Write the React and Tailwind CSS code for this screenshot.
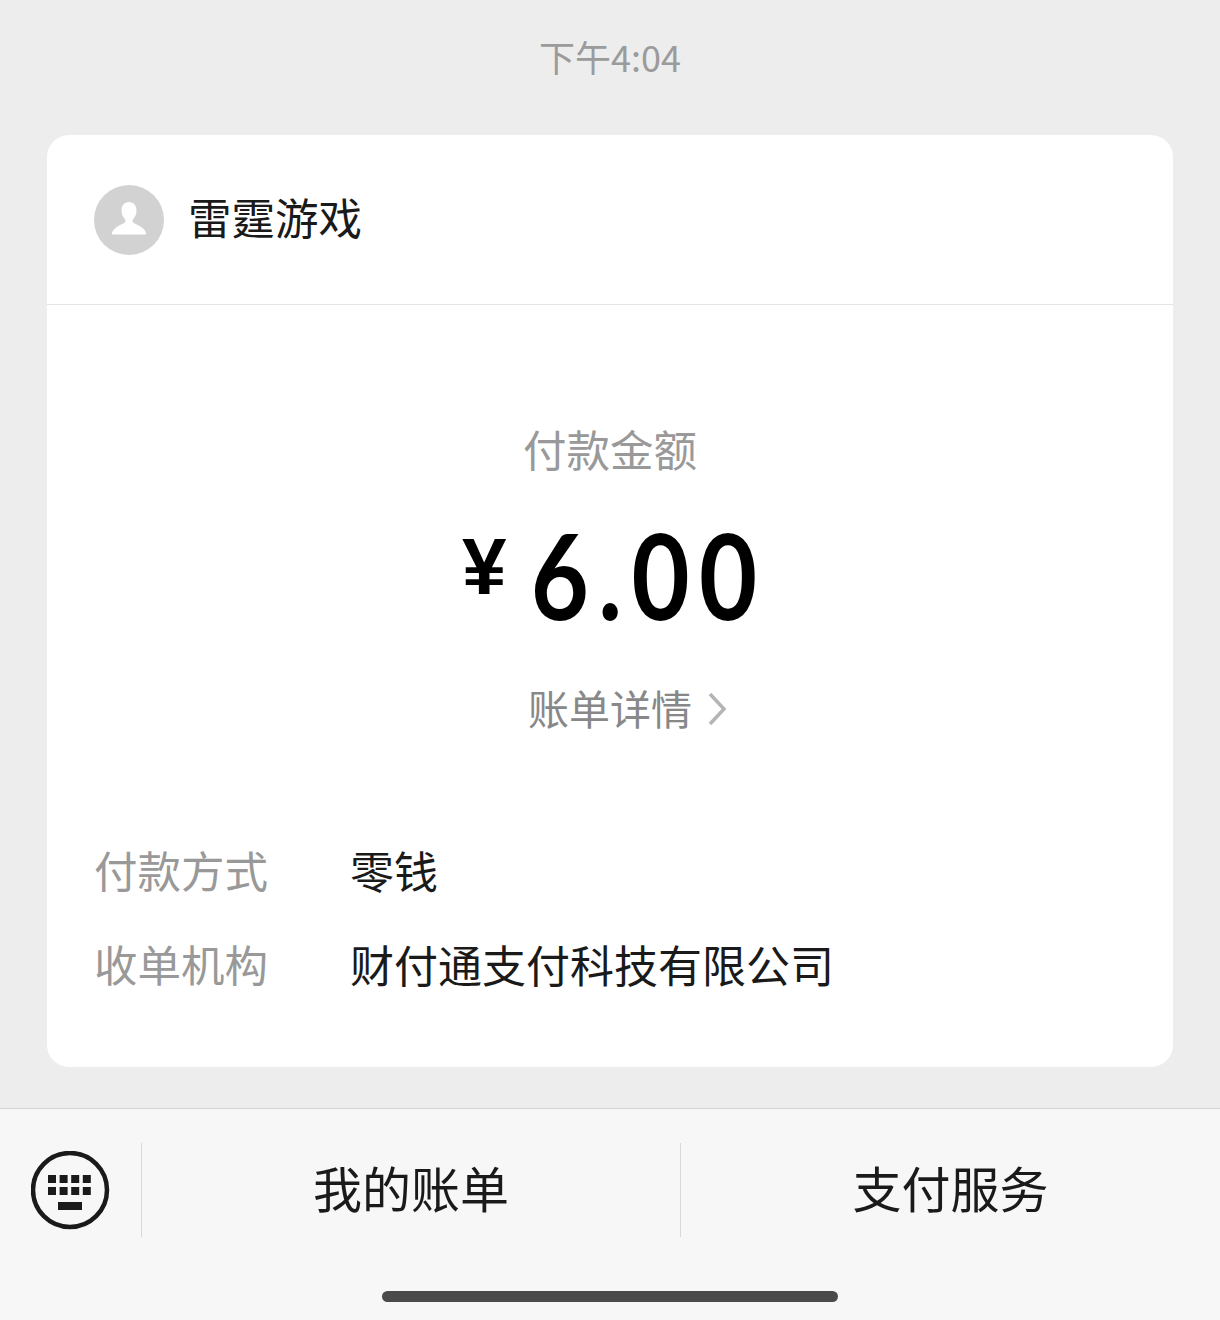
const cjk = "font-['Noto_Sans_CJK_SC','Noto_Sans',sans-serif]";

function Avatar() {
  return (
    <div className="w-[70px] h-[70px] rounded-full bg-[#d2d2d2] flex items-center justify-center">
      <svg width="70" height="70" viewBox="0 0 70 70">
        <path
          d="M35 17c-4.500 0-7.500 3.500-7.500 8.500 0 3.500 1.200 6.500 3.300 8.500 .8.800.8 3-.2 3.800-3 2-10.600 4-12.600 10-.3 1 0 1.700 1 1.700h32c1 0 1.300-.7 1-1.700-2-6-9.600-8-12.600-10-1-.8-1-3-.2-3.800 2.100-2 3.300-5 3.300-8.500 0-5-3-8.500-7.500-8.500z"
          fill="#fff"
        />
      </svg>
    </div>
  );
}

function KeyboardIcon() {
  const keys = [];
  for (let r = 0; r < 2; r++) {
    for (let c = 0; c < 4; c++) {
      keys.push(<rect key={`${r}-${c}`} x={17 + c * 11.600} y={24 + r * 12} width="8" height="8" />);
    }
  }
  return (
    <svg width="80" height="80" viewBox="0 0 80 80" fill="#1a1a1a" className="mt-[2px]">
      <circle cx="39" cy="39" r="37" fill="none" stroke="#1a1a1a" strokeWidth="4.500" />
      {keys}
      <rect x="27" y="51" width="24" height="8" />
    </svg>
  );
}

function InfoRow({ label, value }) {
  return (
    <div className="flex h-[60px] items-center">
      <span className="w-[256px] text-[43.500px] text-[#999999]">{label}</span>
      <span className="text-[44px] text-[#1a1a1a]">{value}</span>
    </div>
  );
}

export default function App() {
  return (
    <div className={`${cjk} w-[1220px] h-[1320px] bg-[#ededed] flex flex-col overflow-hidden`}>
      <div className="h-[135px] pb-[24px] flex items-center justify-center text-[36px] text-[#9b9b9b]">
        下午4:04
      </div>

      <div className="mx-[47px] h-[932px] bg-white rounded-[22px] flex flex-col">
        <div className="h-[170px] pl-[47px] pb-[5px] flex items-center gap-[24px] border-b border-[#e5e5e5]">
          <div className="mt-[5px]">
            <Avatar />
          </div>
          <span className="text-[43.500px] text-[#1a1a1a]">雷霆游戏</span>
        </div>

        <div className="flex flex-col items-center pt-[114px]">
          <div className="h-[60px] flex items-center text-[43.500px] text-[#999999]">付款金额</div>
          <div className="h-[199px] pb-[8px] pl-[8px] flex items-center text-black">
            <span className="font-['Liberation_Sans',sans-serif] font-bold text-[80px] leading-none -mt-[16px] mr-[24px]">¥</span>
            <span className="font-['Lato',sans-serif] font-bold text-[118px] tracking-[11px] [font-kerning:none] leading-none scale-x-[0.85] -mx-[21px]">6.00</span>
          </div>
          <div className="relative h-[60px] flex items-center text-[41px] text-[#888888]">
            <span>账单详情</span>
            <svg width="20" height="34" viewBox="0 0 20 34" fill="none" stroke="#b5b5b5" strokeWidth="3.500" className="absolute left-[179px] top-[14px]">
              <path d="M3 2l14 15L3 32" />
            </svg>
          </div>
        </div>

        <div className="px-[47px] pt-[102px] flex flex-col gap-[34px]">
          <InfoRow label="付款方式" value="零钱" />
          <InfoRow label="收单机构" value="财付通支付科技有限公司" />
        </div>
      </div>

      <div className="mt-[41px] flex-1 bg-[#f7f7f7] border-t border-[#d4d4d4] flex flex-col">
        <div className="mt-[34px] h-[94px] flex items-center">
          <div className="w-[141px] h-full flex items-center justify-center">
            <KeyboardIcon />
          </div>
          <div className="flex-1 h-full pb-[6px] border-l border-[#d9d9d9] flex items-center justify-center text-[49px] text-[#1a1a1a]">
            我的账单
          </div>
          <div className="w-[540px] h-full pb-[6px] border-l border-[#d9d9d9] flex items-center justify-center text-[49px] text-[#1a1a1a]">
            支付服务
          </div>
        </div>
        <div className="mt-[54px] mx-auto w-[456px] h-[11px] rounded-full bg-[#4a4a4a]" />
      </div>
    </div>
  );
}
